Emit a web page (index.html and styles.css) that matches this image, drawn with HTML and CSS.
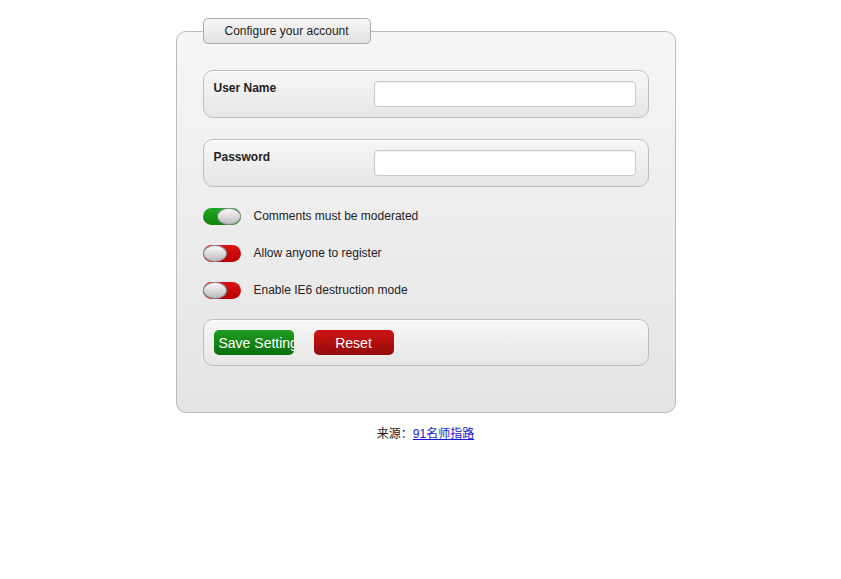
FILE: index.html
```html
<!DOCTYPE html>
<html lang="zh-CN">
<head>
  <meta charset="UTF-8">
  <title>Configure your account</title>
  <link rel="stylesheet" href="styles.css">
</head>
<body>
  <div class="page">
    <form class="settings">
      <fieldset class="panel">
        <legend>Configure your account</legend>

        <div class="field">
          <label for="username">User Name</label>
          <input type="text" id="username">
        </div>

        <div class="field">
          <label for="password">Password</label>
          <input type="password" id="password">
        </div>

        <div class="option">
          <span class="switch on"><span class="knob"></span></span>
          <span class="option-text">Comments must be moderated</span>
        </div>
        <div class="option">
          <span class="switch off"><span class="knob"></span></span>
          <span class="option-text">Allow anyone to register</span>
        </div>
        <div class="option">
          <span class="switch off"><span class="knob"></span></span>
          <span class="option-text">Enable IE6 destruction mode</span>
        </div>

        <div class="actions">
          <button type="button" class="btn btn-save">Save Setting</button>
          <button type="reset" class="btn btn-reset">Reset</button>
        </div>
      </fieldset>
    </form>

    <p class="source">来源：<a href="#">91名师指路</a></p>
  </div>
</body>
</html>
```

FILE: styles.css
```css
body {
  margin: 8px;
  font-family: "Liberation Sans", Arial, "Noto Sans CJK SC", sans-serif;
  font-size: 12px;
  color: #222;
  background: #fff;
}

.page {
  width: 500px;
  margin: 0 auto;
  padding: 10px 0 0 10px;
}

.settings {
  margin: 0;
}

/* Outer panel */
.panel {
  margin: 0;
  padding: 26px 26px 46px;
  min-inline-size: 0;
  border: 1px solid #bcbcbc;
  border-radius: 10px;
  background: linear-gradient(#f6f6f6, #e4e4e4);
}

.panel legend {
  height: 24px;
  line-height: 24px;
  padding: 0 21px;
  border: 1px solid #aaa;
  border-radius: 5px;
  background: linear-gradient(#f7f7f7, #e2e2e2);
  font-size: 12px;
  color: #222;
}

/* Text fields */
.field {
  display: flex;
  align-items: flex-start;
  height: 26px;
  padding: 10px 12px 10px 10px;
  margin-bottom: 21px;
  border: 1px solid #bdbdbd;
  border-radius: 10px;
  background: linear-gradient(#f7f7f7, #e6e6e6);
  box-shadow: inset 0 1px 0 #fff;
}

.field label {
  width: 160px;
  font-weight: bold;
  color: #222;
}

.field input {
  box-sizing: border-box;
  width: 262px;
  height: 26px;
  margin: 0;
  padding: 0 6px;
  border: 1px solid #cacaca;
  border-radius: 4px;
  background: #fff;
  box-shadow: inset 0 1px 2px rgba(0, 0, 0, 0.06);
  font: inherit;
}

/* Switches */
.option {
  display: flex;
  align-items: center;
  height: 17px;
  margin-bottom: 20px;
}

.switch {
  display: flex;
  box-sizing: border-box;
  width: 38px;
  height: 17px;
  border-radius: 9px;
  margin-right: 13px;
}

.switch.on {
  justify-content: flex-end;
  background: linear-gradient(#22a722, #0e820e);
}

.switch.off {
  justify-content: flex-start;
  background: linear-gradient(#dc1616, #b80000);
}

.knob {
  box-sizing: border-box;
  width: 24px;
  height: 17px;
  border: 1px solid #8e8e8e;
  border-radius: 50%;
  background: linear-gradient(#fbfbfb, #d8d8d8 55%, #b9b9b9);
}

.option-text {
  color: #222;
  margin-top: -1px;
}

/* Buttons */
.actions {
  display: flex;
  gap: 20px;
  padding: 10px;
  border: 1px solid #bdbdbd;
  border-radius: 10px;
  background: linear-gradient(#f7f7f7, #e6e6e6);
  box-shadow: inset 0 1px 0 #fff;
}

.btn {
  width: 80px;
  height: 25px;
  padding: 0 5px;
  border: none;
  border-radius: 5px;
  overflow: hidden;
  white-space: nowrap;
  font-family: "Liberation Sans", Arial, sans-serif;
  font-size: 14px;
  color: #fff;
  cursor: pointer;
}

.btn-save {
  background: linear-gradient(#1f9b1f, #0b6f0b);
}

.btn-reset {
  background: linear-gradient(#d01414, #930a0a);
}

.source {
  margin: 12px 0 0;
  text-align: center;
  line-height: 18px;
  font-family: "Liberation Sans", Arial, "Noto Sans CJK SC", sans-serif;
}

.source a {
  color: #1a1ad0;
}
```
